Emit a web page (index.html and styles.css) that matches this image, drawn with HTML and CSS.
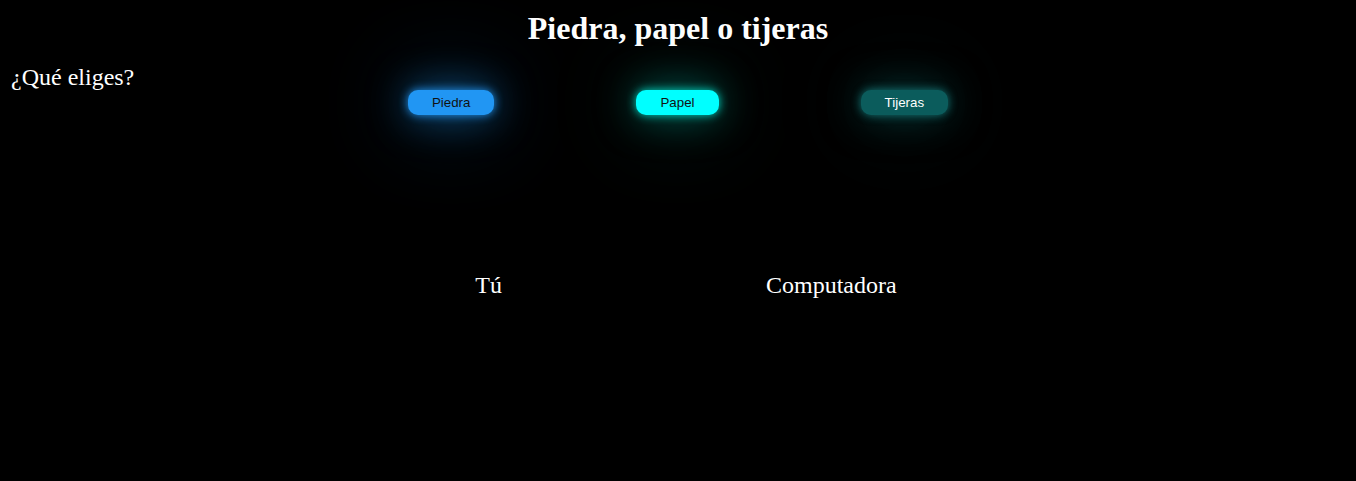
FILE: index.html
```html
<!DOCTYPE html>
<html lang="es">
<head>
<meta charset="utf-8">
<title>Piedra, papel o tijeras</title>
<link rel="stylesheet" href="styles.css">
</head>
<body>
  <h1 class="title">Piedra, papel o tijeras</h1>
  <div class="choose-row">
    <p class="prompt">¿Qué eliges?</p>
    <div class="buttons">
      <button class="btn btn-piedra">Piedra</button>
      <button class="btn btn-papel">Papel</button>
      <button class="btn btn-tijeras">Tijeras</button>
    </div>
    <div></div>
  </div>
  <div class="players">
    <div class="player">Tú</div>
    <div class="player">Computadora</div>
  </div>
</body>
</html>
```
FILE: styles.css
```css
html, body {
  background: #000;
}
body {
  margin: 0;
  color: #fff;
  font-family: "Liberation Serif", "Times New Roman", serif;
  height: 481px;
  overflow: hidden;
}
.title {
  margin: 10px 0 0;
  font-size: 32px;
  font-weight: bold;
  text-align: center;
  line-height: 37px;
}
.choose-row {
  display: grid;
  grid-template-columns: 1fr auto 1fr;
  align-items: start;
}
.prompt {
  margin: 16px 0 0 11px;
  font-size: 24px;
  line-height: 28px;
}
.buttons {
  display: flex;
  gap: 142px;
  margin-top: 43px;
}
.btn {
  font-family: "Liberation Sans", Arial, sans-serif;
  font-size: 13.333px;
  height: 25px;
  padding: 0 24px;
  border: none;
  border-radius: 10px;
  color: #111;
}
.btn-piedra {
  background: #2196f3;
  box-shadow: 0 0 10px rgba(33,150,243,1), 0 0 40px rgba(33,150,243,0.6), 0 0 90px rgba(33,150,243,0.45);
}
.btn-papel {
  background: #00ffff;
  box-shadow: 0 0 10px rgba(0,220,200,1), 0 0 40px rgba(0,190,170,0.55), 0 0 90px rgba(0,170,150,0.4);
}
.btn-tijeras {
  background: #0b5c5c;
  color: #fff;
  box-shadow: 0 0 10px rgba(20,120,120,1), 0 0 40px rgba(15,110,110,0.55), 0 0 90px rgba(15,100,100,0.4);
}
.players {
  display: flex;
  justify-content: center;
  gap: 264px;
  padding-left: 16px;
  margin-top: 156px;
  font-size: 24px;
  line-height: 28px;
}
```
